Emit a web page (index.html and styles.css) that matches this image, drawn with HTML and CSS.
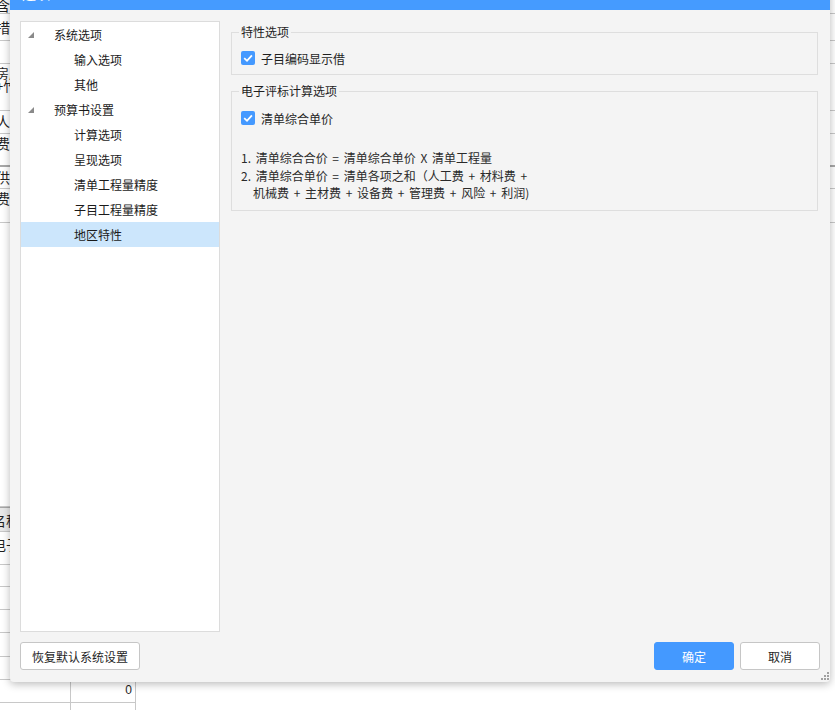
FILE: index.html
```html
<!DOCTYPE html>
<html lang="zh-CN">
<head>
    <meta charset="UTF-8">
    <meta name="viewport" content="width=device-width, initial-scale=1.0">
    <title>选项</title>
    <link rel="stylesheet" href="styles.css">
</head>
<body>
    <!-- 背景表格 -->
    <div class="app">
        <div class="sheet-top">
            <div class="sheet-row h14"><span class="cell-text">含税</span></div>
            <div class="sheet-row h27 pt4"><span class="cell-text">措施项目</span></div>
            <div class="sheet-row h23"></div>
            <div class="sheet-row h47 col"><span class="cell-text wrap">房屋建筑<br>+竹</span></div>
            <div class="sheet-row h23 pt1"><span class="cell-text">人工费</span></div>
            <div class="sheet-row h33 dark"><span class="cell-text">费用</span></div>
            <div class="sheet-row h22 pt1"><span class="cell-text">供应</span></div>
            <div class="sheet-row h34"><span class="cell-text">费率</span></div>
        </div>

        <div class="sheet-bottom">
            <div class="grid-row h22"><div class="c1"></div><div class="c2"></div></div>
            <div class="grid-row h25 head"><div class="c1"><span class="cut">名称</span></div><div class="c2"></div></div>
            <div class="grid-row h33"><div class="c1"><span class="cut">电子</span></div><div class="c2"></div></div>
            <div class="grid-row h22"><div class="c1"></div><div class="c2"></div></div>
            <div class="grid-row h23"><div class="c1"></div><div class="c2"></div></div>
            <div class="grid-row h23"><div class="c1"></div><div class="c2"></div></div>
            <div class="grid-row h24"><div class="c1"></div><div class="c2"></div></div>
            <div class="grid-row h23"><div class="c1"></div><div class="c2"></div></div>
            <div class="grid-row h23"><div class="c1"></div><div class="c2 num">0</div></div>
            <div class="grid-row h23"><div class="c1"></div><div class="c2 num">1014.05</div></div>
        </div>
    </div>

    <!-- 选项对话框 -->
    <div class="dialog">
        <div class="dialog-title">
            <span class="title-text">选项</span>
            <svg class="close" width="10" height="10" viewBox="0 0 10 10">
                <path d="M1 1 L9 9 M9 1 L1 9" stroke="#fff" stroke-width="1.4"/>
            </svg>
        </div>

        <div class="dialog-body">
            <div class="dialog-main">
                <ul class="tree">
                    <li class="tree-item"><span class="toggle"><i class="arrow"></i></span>系统选项</li>
                    <li class="tree-item child">输入选项</li>
                    <li class="tree-item child">其他</li>
                    <li class="tree-item"><span class="toggle"><i class="arrow"></i></span>预算书设置</li>
                    <li class="tree-item child">计算选项</li>
                    <li class="tree-item child">呈现选项</li>
                    <li class="tree-item child">清单工程量精度</li>
                    <li class="tree-item child">子目工程量精度</li>
                    <li class="tree-item child selected">地区特性</li>
                </ul>

                <div class="options">
                    <fieldset class="group">
                        <legend>特性选项</legend>
                        <label class="check-row">
                            <svg class="checkbox" width="14" height="14" viewBox="0 0 14 14">
                                <rect width="14" height="14" rx="2" fill="#4499ff"/>
                                <path d="M3.2 7.2 L6 9.8 L10.9 4.4" fill="none" stroke="#fff" stroke-width="1.8"/>
                            </svg>
                            <span>子目编码显示借</span>
                        </label>
                    </fieldset>

                    <fieldset class="group group-calc">
                        <legend>电子评标计算选项</legend>
                        <label class="check-row">
                            <svg class="checkbox" width="14" height="14" viewBox="0 0 14 14">
                                <rect width="14" height="14" rx="2" fill="#4499ff"/>
                                <path d="M3.2 7.2 L6 9.8 L10.9 4.4" fill="none" stroke="#fff" stroke-width="1.8"/>
                            </svg>
                            <span>清单综合单价</span>
                        </label>
                        <div class="formula">
                            <div>1. 清单综合合价 = 清单综合单价 X 清单工程量</div>
                            <div>2. 清单综合单价 = 清单各项之和（人工费 + 材料费 +</div>
                            <div class="indent">机械费 + 主材费 + 设备费 + 管理费 + 风险 + 利润)</div>
                        </div>
                    </fieldset>
                </div>
            </div>

            <div class="dialog-footer">
                <button class="btn btn-reset">恢复默认系统设置</button>
                <div class="footer-right">
                    <button class="btn btn-primary">确定</button>
                    <button class="btn">取消</button>
                </div>
            </div>

            <svg class="grip" width="9" height="9" viewBox="0 0 9 9">
                <rect x="7" y="1" width="2" height="2" fill="#a0a0a0"/>
                <rect x="4" y="4" width="2" height="2" fill="#a0a0a0"/>
                <rect x="7" y="4" width="2" height="2" fill="#a0a0a0"/>
                <rect x="1" y="7" width="2" height="2" fill="#a0a0a0"/>
                <rect x="4" y="7" width="2" height="2" fill="#a0a0a0"/>
                <rect x="7" y="7" width="2" height="2" fill="#a0a0a0"/>
            </svg>
        </div>
    </div>
</body>
</html>
```

FILE: styles.css
```css
body {
    margin: 0;
    width: 835px;
    height: 710px;
    overflow: hidden;
    background-color: #fff;
    font-family: "Noto Sans CJK SC", "Noto Sans", sans-serif;
    font-size: 12px;
    color: #1f1f1f;
}

/* 背景表格 */
.app {
    width: 835px;
    height: 710px;
}

.sheet-top {
    height: 223px;
}

.sheet-row {
    display: flex;
    box-sizing: border-box;
    border-bottom: 1px solid #c8c8c8;
    font-size: 14px;
    line-height: 18px;
    overflow: hidden;
}

.sheet-row.col {
    font-size: 13px;
    line-height: 13px;
    padding-top: 2px;
}

.sheet-row.dark {
    border-bottom: 2px solid #a8a8a8;
}

.cell-text {
    margin-left: -4px;
    white-space: nowrap;
}

.pt1 { padding-top: 1px; }
.pt4 { padding-top: 4px; }

.h14 { height: 14px; line-height: 10px; }
.h22 { height: 22px; }
.h23 { height: 23px; }
.h24 { height: 24px; }
.h25 { height: 25px; }
.h27 { height: 27px; }
.h33 { height: 33px; }
.h34 { height: 34px; }
.h47 { height: 47px; }

.sheet-bottom {
    margin-top: 262px;
}

.grid-row {
    display: flex;
    width: 136px;
    box-sizing: border-box;
    border-bottom: 1px solid #c8c8c8;
    font-size: 14px;
    line-height: 20px;
}

.grid-row.head {
    background-color: #e8e8e8;
    border-top: 1px solid #a8a8a8;
}

.c1 {
    width: 71px;
    box-sizing: border-box;
    border-right: 1px solid #c8c8c8;
    overflow: hidden;
    white-space: nowrap;
}

.c2 {
    width: 65px;
    box-sizing: border-box;
    border-right: 1px solid #c8c8c8;
}

.num {
    text-align: right;
    padding-right: 3px;
    font-family: "Liberation Sans", Arial, sans-serif;
    font-size: 12px;
    line-height: 20px;
}

.grid-row:last-child .num {
    line-height: 26px;
}

.cut {
    display: inline-block;
    margin-left: -8px;
    padding-top: 2px;
}

/* 对话框 */
.dialog {
    position: absolute;
    left: 10px;
    top: -20px;
    width: 820px;
    height: 702px;
    background-color: #f4f4f4;
    box-shadow: 0 2px 8px rgba(0, 0, 0, 0.28);
    border-radius: 0 0 4px 4px;
}

.dialog-title {
    height: 30px;
    background-color: #459bff;
    color: #fff;
    display: flex;
    align-items: center;
    justify-content: space-between;
    padding: 0 40px 0 12px;
}

.title-text {
    font-size: 14px;
    line-height: 16px;
    margin-top: -4px;
}

.close {
    margin-top: -1px;
}

.dialog-body {
    position: relative;
    height: 672px;
    box-sizing: border-box;
    padding: 11px 10px 12px 10px;
}

.dialog-main {
    display: flex;
    gap: 11px;
    height: 611px;
}

/* 左侧树 */
.tree {
    width: 200px;
    box-sizing: border-box;
    margin: 0;
    padding: 0;
    list-style: none;
    background-color: #fff;
    border: 1px solid #dcdcdc;
}

.tree-item {
    display: flex;
    align-items: center;
    height: 25px;
    padding-left: 7px;
    color: #1a1a1a;
}

.tree-item.child {
    padding-left: 53px;
}

.tree-item.selected {
    background-color: #cce6fc;
}

.toggle {
    width: 26px;
    display: flex;
    align-items: center;
}

.arrow {
    width: 0;
    height: 0;
    border-left: 6px solid transparent;
    border-bottom: 6px solid #8a8a8a;
}

/* 右侧选项 */
.options {
    flex: 1;
    padding: 2px 2px 0 0;
}

.group {
    margin: 0;
    padding: 7px 9px 6px 9px;
    border: 1px solid #dedede;
    min-width: 0;
}

.group legend {
    padding: 0 2px;
    margin-left: -2px;
    font-size: 12px;
    line-height: 18px;
    color: #1f1f1f;
}

.group-calc {
    margin-top: 7px;
    padding-top: 8px;
    padding-bottom: 8px;
}

.check-row {
    display: flex;
    align-items: center;
    gap: 6px;
    height: 20px;
}

.checkbox {
    display: block;
}

.formula {
    margin-top: 21px;
    line-height: 17.5px;
    color: #2a2a2a;
    word-spacing: 2px;
}

.formula .indent {
    padding-left: 12px;
}

/* 底部按钮 */
.dialog-footer {
    display: flex;
    justify-content: space-between;
    margin-top: 10px;
}

.footer-right {
    display: flex;
    gap: 6px;
}

.btn {
    height: 28px;
    width: 80px;
    box-sizing: border-box;
    border: 1px solid #c6c6c6;
    border-radius: 3px;
    background-color: #fff;
    font-family: "Noto Sans CJK SC", "Noto Sans", sans-serif;
    font-size: 12px;
    color: #1f1f1f;
    padding: 0;
    cursor: pointer;
}

.btn-reset {
    width: 120px;
}

.btn-primary {
    background-color: #4499ff;
    border-color: #4499ff;
    color: #fff;
}

.grip {
    position: absolute;
    right: 1px;
    bottom: 2px;
}
```
